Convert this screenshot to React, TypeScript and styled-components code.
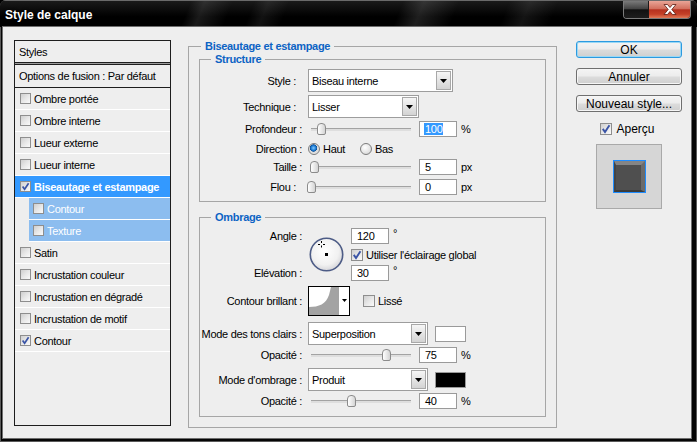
import React from 'react';
import styled, { createGlobalStyle } from 'styled-components';

const GlobalStyle = createGlobalStyle`
  html, body { margin: 0; padding: 0; background: #000; }
  body {
    font-family: "Liberation Sans", Arial, sans-serif;
    font-size: 11px;
    letter-spacing: -0.3px;
    color: #000;
  }
  * { box-sizing: border-box; }
`;

const Window = styled.div`
  width: 697px;
  height: 442px;
  display: flex;
  flex-direction: column;
  background: #050505;
  border-radius: 6px 6px 0 0;
  overflow: hidden;
  box-shadow: inset 0 0 0 1px #5a5a5a;
`;

const TitleBar = styled.div`
  height: 27px;
  flex: none;
  display: flex;
  align-items: flex-start;
  justify-content: space-between;
  padding: 0 6px 0 5px;
  border-top: 1px solid #6a6a6a;
  background:
    linear-gradient(112deg,
      transparent 0%, transparent 27%,
      rgba(255,255,255,0.10) 29%, transparent 33%,
      transparent 36%, rgba(255,255,255,0.07) 38%, transparent 41%,
      transparent 57%, rgba(255,255,255,0.12) 60%, transparent 65%,
      transparent 72%, rgba(255,255,255,0.08) 75%, transparent 79%,
      transparent 100%),
    linear-gradient(#1a1a1a, #000 60%);
`;

const TitleText = styled.span`
  margin-top: 7px;
  color: #fff;
  font-weight: 700;
  font-size: 12px;
  letter-spacing: 0;
  text-shadow: 0 0 3px rgba(0,0,0,0.9);
`;

const CaptionGroup = styled.div`
  display: flex;
  height: 18px;
  border: 1px solid #7c7c7c;
  border-top: none;
  border-radius: 0 0 4px 4px;
  overflow: hidden;
`;

const CaptionBtn = styled.div<{ $close?: boolean }>`
  width: ${p => (p.$close ? 42 : 24)}px;
  height: 100%;
  display: flex;
  align-items: center;
  justify-content: center;
  background: ${p =>
    p.$close
      ? 'linear-gradient(#e9a597 0%, #d2705e 45%, #b6311f 52%, #c44128 78%, #e27a58 100%)'
      : 'linear-gradient(#7a7a7a 0%, #444 45%, #111 52%, #1e1e1e 100%)'};
  & + & { border-left: 1px solid #1a1a1a; }
`;

const Body = styled.div`
  flex: 1;
  margin: 0 6px 4px 3px;
  background: #eeeeee;
  display: flex;
  align-items: flex-start;
  padding: 13px 9px 0 11px;
  box-shadow: 0 0 0 1px #6e6e6e;
`;

/* ---------- left styles list ---------- */

const StylesPanel = styled.div`
  width: 157px;
  height: 386px;
  flex: none;
  border: 1px solid #1e1e1e;
  display: flex;
  flex-direction: column;
`;

const PanelHeader = styled.div`
  height: 22px;
  flex: none;
  display: flex;
  align-items: center;
  padding-left: 4px;
  border-bottom: 1px solid #1e1e1e;
`;

const PanelDivider = styled.div`
  height: 2px;
  flex: none;
  background: #9c9c9c;
  border-bottom: 1px solid #1e1e1e;
`;

const OptionsRow = styled.div`
  height: 23px;
  flex: none;
  display: flex;
  align-items: center;
  padding-left: 4px;
  border-bottom: 1px solid #1e1e1e;
`;

type Tone = 'sel' | 'sub' | undefined;

const ListRow = styled.div<{ $tone?: Tone }>`
  height: 22px;
  flex: none;
  display: flex;
  align-items: center;
  gap: 3px;
  border-bottom: 1px solid #ffffff;
  margin-left: ${p => (p.$tone === 'sub' ? 14 : 0)}px;
  padding-left: ${p => (p.$tone === 'sub' ? 4 : 5)}px;
  background: ${p => (p.$tone === 'sel' ? '#3399ff' : p.$tone === 'sub' ? '#8cbdef' : 'transparent')};
  color: ${p => (p.$tone ? '#ffffff' : '#000000')};
  font-weight: ${p => (p.$tone === 'sel' ? 700 : 400)};
`;

const CheckBox = styled.span<{ $size: number }>`
  width: ${p => p.$size}px;
  height: ${p => p.$size}px;
  flex: none;
  border: 1px solid #8e8e8e;
  background: linear-gradient(135deg, #cfcfcf 0%, #e9e9e9 55%, #fafafa 100%);
  display: flex;
  align-items: center;
  justify-content: center;
`;

const Check = ({ on, size = 11 }: { on?: boolean; size?: number }) => (
  <CheckBox $size={size}>
    {on && (
      <svg width={size - 2} height={size - 2} viewBox="0 0 9 9">
        <path d="M1.6 4.4 L3.6 7.2 L7.6 1.2" stroke="#3a54a6" strokeWidth="1.7" fill="none" />
      </svg>
    )}
  </CheckBox>
);

/* ---------- group boxes ---------- */

const OuterGroup = styled.section`
  position: relative;
  width: 369px;
  height: 382px;
  flex: none;
  margin: 6px 0 0 17px;
  border: 1px solid #a6a6a6;
  padding: 12px 10px 0 10px;
`;

const InnerGroup = styled.section<{ $mt?: number; $pt: number; $pb: number }>`
  position: relative;
  margin-top: ${p => p.$mt ?? 0}px;
  border: 1px solid #a6a6a6;
  padding: ${p => p.$pt}px 0 ${p => p.$pb}px 0;
  display: flex;
  flex-direction: column;
`;

const GroupTitle = styled.h3<{ $left: number }>`
  position: absolute;
  top: -7px;
  left: ${p => p.$left}px;
  margin: 0;
  padding: 0 4px;
  background: #eeeeee;
  color: #0c63c4;
  font-size: 11px;
  line-height: 13px;
  font-weight: 700;
`;

const FieldRow = styled.div<{ $h: number; $mt?: number }>`
  height: ${p => p.$h}px;
  margin-top: ${p => p.$mt ?? 0}px;
  flex: none;
  display: flex;
  align-items: center;
`;

const Label = styled.span<{ $pr?: number }>`
  width: 102px;
  flex: none;
  text-align: right;
  white-space: nowrap;
  padding-right: ${p => p.$pr ?? 0}px;
  margin-right: 6px;
`;

const SelectBox = styled.div<{ $w: number }>`
  width: ${p => p.$w}px;
  height: 23px;
  flex: none;
  border: 1px solid #9d9d9d;
  background: #fff;
  display: flex;
  align-items: center;
  padding: 1px 1px 1px 3px;
`;

const SelectText = styled.span`
  flex: 1;
`;

const SelectArrow = styled.span`
  width: 15px;
  height: 19px;
  flex: none;
  border: 1px solid #a8a8a8;
  background: linear-gradient(#f6f6f6, #d3d3d3);
  display: flex;
  align-items: center;
  justify-content: center;
`;

const Triangle = ({ w = 7, h = 4 }: { w?: number; h?: number }) => (
  <svg width={w} height={h} viewBox={`0 0 ${w} ${h}`}>
    <polygon points={`0,0 ${w},0 ${w / 2},${h}`} fill="#000" />
  </svg>
);

const Select = ({ w, value }: { w: number; value: string }) => (
  <SelectBox $w={w}>
    <SelectText>{value}</SelectText>
    <SelectArrow>
      <Triangle />
    </SelectArrow>
  </SelectBox>
);

const NumBox = styled.div`
  width: 38px;
  height: 16px;
  flex: none;
  border: 1px solid #9a9a9a;
  background: #fff;
  display: flex;
  align-items: center;
  padding-left: 5px;
`;

const Selected = styled.span`
  background: #3399ff;
  color: #fff;
  padding: 0 1px;
  margin-left: -1px;
`;

const Unit = styled.span`
  margin-left: 4px;
`;

const SliderBox = styled.div`
  position: relative;
  width: 103px;
  height: 16px;
  flex: none;
  margin-right: 8px;
`;

const Track = styled.div`
  position: absolute;
  left: 3px;
  right: 0;
  top: 7px;
  height: 3px;
  background: #dedede;
  border-top: 1px solid #a3a3a3;
`;

const Thumb = styled.div`
  position: absolute;
  top: 2px;
  width: 9px;
  height: 12px;
  border: 1px solid #8b8b8b;
  border-radius: 4px 4px 2px 2px;
  background: linear-gradient(90deg, #ffffff, #d4d4d4);
`;

const Slider = ({ pct }: { pct: number }) => (
  <SliderBox>
    <Track />
    <Thumb style={{ left: `${3 + pct - 4.5}px` }} />
  </SliderBox>
);

const RadioDot = styled.span<{ $on?: boolean }>`
  width: 12px;
  height: 12px;
  flex: none;
  border-radius: 50%;
  border: 1px solid #7d7d7d;
  background: ${p =>
    p.$on
      ? 'radial-gradient(circle at 45% 40%, #7fc8ff 0%, #1c7ad2 30%, #0c4f98 42%, #d9d9d9 48%, #f3f3f3 100%)'
      : 'radial-gradient(circle at 40% 35%, #ffffff 0%, #e4e4e4 60%, #c8c8c8 100%)'};
`;

const RadioOption = styled.span<{ $w?: number }>`
  display: flex;
  align-items: center;
  gap: 3px;
  width: ${p => (p.$w ? `${p.$w}px` : 'auto')};
`;

const AngleGrid = styled.div`
  margin-top: 10px;
  display: grid;
  grid-template-columns: 102px 35px auto;
  grid-template-rows: 16px 15px 16px;
  column-gap: 7px;
  row-gap: 3px;
  align-items: center;
`;

const GridLabel = styled.span<{ $row: number }>`
  grid-column: 1;
  grid-row: ${p => p.$row};
  text-align: right;
  white-space: nowrap;
`;

const DialCell = styled.div`
  grid-column: 2;
  grid-row: 1 / 4;
  width: 35px;
  height: 35px;
`;

const GridCell = styled.div<{ $row: number }>`
  grid-column: 3;
  grid-row: ${p => p.$row};
  display: flex;
  align-items: center;
  gap: 3px;
`;

const Degree = styled.span`
  align-self: flex-start;
  margin-left: 1px;
  line-height: 11px;
`;

const ContourPicker = styled.div`
  width: 42px;
  height: 30px;
  flex: none;
  border: 1px solid #000;
  background: #fff;
  display: flex;
  align-items: center;
`;

const ContourArrow = styled.span`
  flex: 1;
  display: flex;
  justify-content: center;
  margin-top: -2px;
`;

const InlineCheck = styled.span<{ $ml: number }>`
  margin-left: ${p => p.$ml}px;
  display: flex;
  align-items: center;
  gap: 3px;
`;

const Swatch = styled.span<{ $color: string }>`
  width: 31px;
  height: 16px;
  flex: none;
  margin-left: 7px;
  border: 1px solid #9a9a9a;
  background: ${p => p.$color};
`;

/* ---------- right column ---------- */

const SideColumn = styled.div`
  width: 106px;
  flex: none;
  margin-left: 19px;
  padding-top: 1px;
  display: flex;
  flex-direction: column;
  align-items: center;
`;

const DlgButton = styled.div<{ $default?: boolean }>`
  width: 106px;
  height: 17px;
  margin-bottom: 10px;
  border: 1px solid ${p => (p.$default ? '#2c9ae0' : '#6f6f6f')};
  border-radius: 3px;
  box-shadow: ${p => (p.$default ? 'inset 0 0 0 1px #9ad8f5' : 'inset 0 0 0 1px #f6f6f6')};
  background: linear-gradient(#f4f4f4 0%, #ececec 48%, #dcdcdc 52%, #cfcfcf 100%);
  display: flex;
  align-items: center;
  justify-content: center;
  font-size: 12px;
  letter-spacing: 0;
`;

const PreviewToggle = styled.div`
  display: flex;
  align-items: center;
  gap: 4px;
  font-size: 12px;
  letter-spacing: 0;
  height: 14px;
  margin-right: 3px;
`;

const PreviewBox = styled.div`
  width: 66px;
  height: 65px;
  margin-top: 8px;
  border: 1px solid #a9a9a9;
  background: #d6d6d6;
  display: flex;
  align-items: center;
  justify-content: center;
`;

const PreviewSwatch = styled.div`
  width: 33px;
  height: 33px;
  border: 1px solid #1d8cff;
`;

const PreviewBevel = styled.div`
  width: 100%;
  height: 100%;
  border-style: solid;
  border-width: 4px 4px 2px 2px;
  border-color: #858585 #6c6c6c #3b3b3b #444444;
  background: #4f4f4f;
`;

const layers: { label: string; checked?: boolean; tone?: Tone }[] = [
  { label: 'Ombre portée' },
  { label: 'Ombre interne' },
  { label: 'Lueur externe' },
  { label: 'Lueur interne' },
  { label: 'Biseautage et estampage', checked: true, tone: 'sel' },
  { label: 'Contour', tone: 'sub' },
  { label: 'Texture', tone: 'sub' },
  { label: 'Satin' },
  { label: 'Incrustation couleur' },
  { label: 'Incrustation en dégradé' },
  { label: 'Incrustation de motif' },
  { label: 'Contour', checked: true },
];

const Dial = () => (
  <svg width="35" height="35" viewBox="0 0 35 35">
    <defs>
      <radialGradient id="dialFill" cx="45%" cy="40%" r="65%">
        <stop offset="0" stopColor="#ffffff" />
        <stop offset="0.65" stopColor="#f1f1f1" />
        <stop offset="1" stopColor="#cfcfd4" />
      </radialGradient>
    </defs>
    <circle cx="17.5" cy="17.5" r="16.2" fill="url(#dialFill)" stroke="#4d5c86" strokeWidth="1.6" />
    <g stroke="#000" strokeWidth="1">
      <line x1="12.5" y1="4" x2="12.5" y2="6" />
      <line x1="12.5" y1="8.5" x2="12.5" y2="10.5" />
      <line x1="9" y1="7.5" x2="11" y2="7.5" />
      <line x1="14" y1="7.5" x2="16" y2="7.5" />
    </g>
    <rect x="16" y="16" width="3" height="3" fill="#000" />
  </svg>
);

const ContourPreview = () => (
  <svg width="30" height="28" viewBox="0 0 30 28">
    <path d="M0 28 L0 20 C10 20 17 17 20 8 L22 0 L30 0 L30 28 Z" fill="#a3a3a3" />
  </svg>
);

const CloseGlyph = () => (
  <svg width="14" height="11" viewBox="0 0 14 11">
    <path
      d="M1 0.5 H4.5 L7 3.5 L9.5 0.5 H13 L8.8 5.5 L13 10.5 H9.5 L7 7.5 L4.5 10.5 H1 L5.2 5.5 Z"
      fill="#ffffff"
      stroke="#5a1a10"
      strokeWidth="0.8"
    />
  </svg>
);

export default function App() {
  return (
    <>
      <GlobalStyle />
      <Window>
        <TitleBar>
          <TitleText>Style de calque</TitleText>
          <CaptionGroup>
            <CaptionBtn />
            <CaptionBtn $close>
              <CloseGlyph />
            </CaptionBtn>
          </CaptionGroup>
        </TitleBar>

        <Body>
          <StylesPanel>
            <PanelHeader>Styles</PanelHeader>
            <PanelDivider />
            <OptionsRow>Options de fusion : Par défaut</OptionsRow>
            {layers.map((l, i) => (
              <ListRow key={i} $tone={l.tone}>
                <Check on={l.checked} />
                <span>{l.label}</span>
              </ListRow>
            ))}
          </StylesPanel>

          <OuterGroup>
            <GroupTitle $left={12}>Biseautage et estampage</GroupTitle>

            <InnerGroup $pt={9} $pb={4}>
              <GroupTitle $left={11}>Structure</GroupTitle>
              <FieldRow $h={23}>
                <Label $pr={6}>Style :</Label>
                <Select w={145} value="Biseau interne" />
              </FieldRow>
              <FieldRow $h={23} $mt={3}>
                <Label $pr={6}>Technique :</Label>
                <Select w={111} value="Lisser" />
              </FieldRow>
              <FieldRow $h={22}>
                <Label>Profondeur :</Label>
                <Slider pct={10} />
                <NumBox>
                  <Selected>100</Selected>
                </NumBox>
                <Unit>%</Unit>
              </FieldRow>
              <FieldRow $h={17}>
                <Label>Direction :</Label>
                <RadioOption $w={52}>
                  <RadioDot $on />
                  <span>Haut</span>
                </RadioOption>
                <RadioOption>
                  <RadioDot />
                  <span>Bas</span>
                </RadioOption>
              </FieldRow>
              <FieldRow $h={20}>
                <Label>Taille :</Label>
                <Slider pct={3} />
                <NumBox>5</NumBox>
                <Unit>px</Unit>
              </FieldRow>
              <FieldRow $h={20}>
                <Label $pr={6}>Flou :</Label>
                <Slider pct={0} />
                <NumBox>0</NumBox>
                <Unit>px</Unit>
              </FieldRow>
            </InnerGroup>

            <InnerGroup $mt={15} $pt={0} $pb={5}>
              <GroupTitle $left={11}>Ombrage</GroupTitle>
              <AngleGrid>
                <GridLabel $row={1}>Angle :</GridLabel>
                <GridLabel $row={3}>Elévation :</GridLabel>
                <DialCell>
                  <Dial />
                </DialCell>
                <GridCell $row={1}>
                  <NumBox>120</NumBox>
                  <Degree>°</Degree>
                </GridCell>
                <GridCell $row={2}>
                  <Check on size={12} />
                  <span>Utiliser l'éclairage global</span>
                </GridCell>
                <GridCell $row={3}>
                  <NumBox>30</NumBox>
                  <Degree>°</Degree>
                </GridCell>
              </AngleGrid>
              <FieldRow $h={30} $mt={5}>
                <Label>Contour brillant :</Label>
                <ContourPicker>
                  <ContourPreview />
                  <ContourArrow>
                    <Triangle w={5} h={3} />
                  </ContourArrow>
                </ContourPicker>
                <InlineCheck $ml={13}>
                  <Check size={12} />
                  <span>Lissé</span>
                </InlineCheck>
              </FieldRow>
              <FieldRow $h={23} $mt={6}>
                <Label>Mode des tons clairs :</Label>
                <Select w={120} value="Superposition" />
                <Swatch $color="#ffffff" />
              </FieldRow>
              <FieldRow $h={20}>
                <Label>Opacité :</Label>
                <Slider pct={75} />
                <NumBox>75</NumBox>
                <Unit>%</Unit>
              </FieldRow>
              <FieldRow $h={23} $mt={3}>
                <Label>Mode d'ombrage :</Label>
                <Select w={120} value="Produit" />
                <Swatch $color="#000000" />
              </FieldRow>
              <FieldRow $h={20}>
                <Label>Opacité :</Label>
                <Slider pct={40} />
                <NumBox>40</NumBox>
                <Unit>%</Unit>
              </FieldRow>
            </InnerGroup>
          </OuterGroup>

          <SideColumn>
            <DlgButton $default>OK</DlgButton>
            <DlgButton>Annuler</DlgButton>
            <DlgButton>Nouveau style...</DlgButton>
            <PreviewToggle>
              <Check on size={12} />
              <span>Aperçu</span>
            </PreviewToggle>
            <PreviewBox>
              <PreviewSwatch>
                <PreviewBevel />
              </PreviewSwatch>
            </PreviewBox>
          </SideColumn>
        </Body>
      </Window>
    </>
  );
}
